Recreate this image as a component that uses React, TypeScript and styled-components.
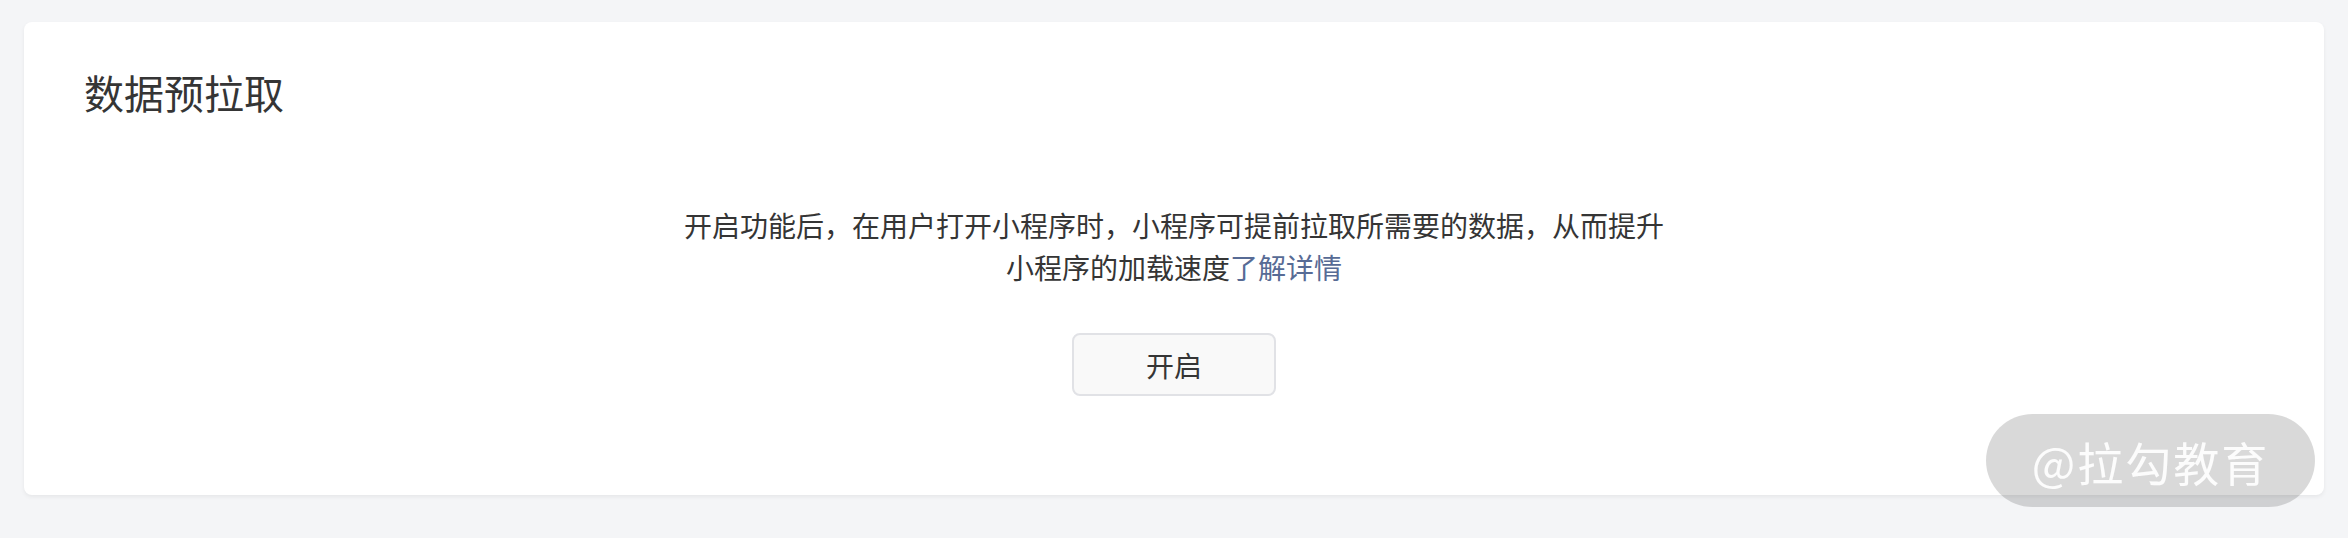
import React from "react";
import styled, { createGlobalStyle } from "styled-components";

const GlobalStyle = createGlobalStyle`
  html, body {
    margin: 0;
    padding: 0;
    background: #f4f5f7;
  }
  body {
    font-family: "Noto Sans CJK SC", "Noto Sans", sans-serif;
    color: #353535;
  }
`;

const Page = styled.div`
  position: relative;
  width: 2348px;
  height: 538px;
  padding: 22px 24px 0;
  box-sizing: border-box;
`;

const Card = styled.section`
  background: #fff;
  border-radius: 8px;
  box-shadow: 0 2px 4px rgba(0, 0, 0, 0.06);
  padding: 42px 60px 99px;
`;

const Title = styled.h2`
  margin: 0;
  font-size: 40px;
  line-height: 56px;
  font-weight: 400;
  color: #353535;
`;

const Body = styled.div`
  display: flex;
  flex-direction: column;
  align-items: center;
  margin-top: 84px;
`;

const Desc = styled.p`
  margin: 0;
  max-width: 1000px;
  font-size: 28px;
  line-height: 42px;
  text-align: center;
  color: #353535;
`;

const Link = styled.a`
  color: #576b95;
  text-decoration: none;
`;

const Button = styled.button`
  margin-top: 45px;
  width: 204px;
  height: 63px;
  border: 2px solid #e1e2e6;
  border-radius: 8px;
  background: #f9f9f9;
  font-family: inherit;
  font-size: 28px;
  color: #353535;
  cursor: pointer;
`;

const Watermark = styled.div`
  position: absolute;
  right: 33px;
  top: 414px;
  width: 329px;
  height: 93px;
  border-radius: 47px;
  background: rgba(0, 0, 0, 0.15);
  display: flex;
  align-items: center;
  justify-content: center;
  font-size: 46px;
  color: rgba(255, 255, 255, 0.9);
  letter-spacing: 2px;
  filter: blur(0.6px);
`;

export default function App() {
  return (
    <>
      <GlobalStyle />
      <Page>
        <Card>
          <Title>数据预拉取</Title>
          <Body>
            <Desc>
              开启功能后，在用户打开小程序时，小程序可提前拉取所需要的数据，从而提升小程序的加载速度
              <Link href="#">了解详情</Link>
            </Desc>
            <Button>开启</Button>
          </Body>
        </Card>
        <Watermark>@拉勾教育</Watermark>
      </Page>
    </>
  );
}
